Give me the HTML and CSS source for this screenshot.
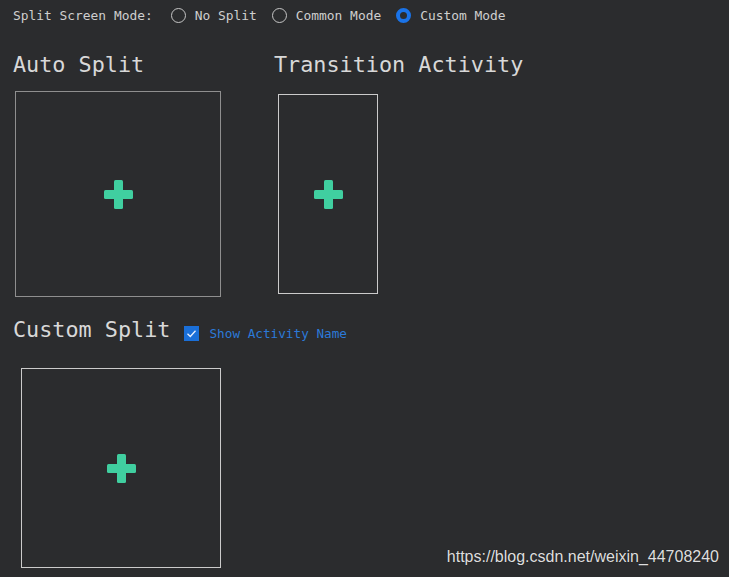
FILE: index.html
```html
<!DOCTYPE html>
<html>
<head>
<meta charset="utf-8">
<link rel="stylesheet" href="styles.css">
</head>
<body>
<div class="topbar">
  <span class="label">Split Screen Mode:</span>
  <span class="option"><span class="radio"></span>No Split</span>
  <span class="option"><span class="radio"></span>Common Mode</span>
  <span class="option"><span class="radio checked"></span>Custom Mode</span>
</div>
<div class="sections">
  <div class="col col-auto">
    <h2 class="title">Auto Split</h2>
    <div class="box box-auto">
      <svg class="plus" width="29" height="29" viewBox="0 0 29 29"><rect x="0" y="10" width="29" height="9" rx="1.5" fill="#40cfa0"/><rect x="10" y="0" width="9" height="29" rx="1.5" fill="#40cfa0"/></svg>
    </div>
  </div>
  <div class="col">
    <h2 class="title">Transition Activity</h2>
    <div class="box box-trans">
      <svg class="plus" width="29" height="29" viewBox="0 0 29 29"><rect x="0" y="10" width="29" height="9" rx="1.5" fill="#40cfa0"/><rect x="10" y="0" width="9" height="29" rx="1.5" fill="#40cfa0"/></svg>
    </div>
  </div>
</div>
<div class="custom-row">
  <h2 class="title">Custom Split</h2>
  <span class="check"><svg width="15" height="15" viewBox="0 0 15 15"><path d="M3.5 7.8 L6.3 10.5 L11.5 4.8" fill="none" stroke="#e8f0ff" stroke-width="1.3"/></svg></span>
  <span class="check-label">Show Activity Name</span>
</div>
<div class="custom-area">
  <div class="box box-custom">
    <svg class="plus" width="29" height="29" viewBox="0 0 29 29"><rect x="0" y="10" width="29" height="9" rx="1.5" fill="#40cfa0"/><rect x="10" y="0" width="9" height="29" rx="1.5" fill="#40cfa0"/></svg>
  </div>
</div>
<div class="watermark">https://blog.csdn.net/weixin_44708240</div>
</body>
</html>
```

FILE: styles.css
```css
html, body {
  margin: 0;
  padding: 0;
  background: #2b2c2e;
  height: 100%;
}
body {
  position: relative;
  font-family: "DejaVu Sans Mono", "Liberation Mono", monospace;
  color: #d2d2d2;
  overflow: hidden;
}
.topbar {
  display: flex;
  align-items: center;
  height: 30px;
  padding-left: 13px;
  font-size: 12.9px;
  color: #cfcfcf;
}
.label {
  margin-right: 18px;
}
.option {
  display: flex;
  align-items: center;
  gap: 9px;
  margin-right: 15px;
}
.radio {
  display: inline-block;
  width: 15px;
  height: 15px;
  box-sizing: border-box;
  border: 1.5px solid #c6c6c6;
  border-radius: 50%;
}
.radio.checked {
  border: 4.5px solid #1a73e8;
}
.sections {
  display: flex;
  padding: 22px 0 0 13px;
}
.col {
  display: flex;
  flex-direction: column;
  align-items: flex-start;
}
.col-auto {
  width: 261px;
}
.title {
  margin: 0;
  font-size: 21.8px;
  line-height: 26px;
  font-weight: normal;
  color: #d8d8d8;
}
.box {
  box-sizing: border-box;
  display: flex;
  align-items: center;
  justify-content: center;
}
.box-auto {
  margin-top: 13px;
  margin-left: 2px;
  width: 206px;
  height: 206px;
  border: 1px solid #8f8f8f;
}
.box-trans {
  margin-top: 16px;
  margin-left: 4px;
  width: 100px;
  height: 200px;
  border: 1px solid #cbcbcb;
}
.custom-row {
  display: flex;
  align-items: center;
  margin-top: 20px;
  padding-left: 13px;
}
.check {
  display: flex;
  width: 15px;
  height: 15px;
  margin-left: 14px;
  margin-top: 7px;
  background: #1a6fd8;
}
.check-label {
  margin-left: 10px;
  margin-top: 7px;
  font-size: 12.7px;
  color: #2c7ad8;
}
.custom-area {
  padding: 25px 0 0 21px;
}
.box-custom {
  width: 200px;
  height: 200px;
  border: 1px solid #cbcbcb;
}
.watermark {
  position: absolute;
  right: 10px;
  bottom: 11px;
  font-family: "Liberation Sans", Arial, sans-serif;
  font-size: 16px;
  color: #dedede;
  text-shadow: 0 0 1px rgba(0,0,0,0.4);
}
```
